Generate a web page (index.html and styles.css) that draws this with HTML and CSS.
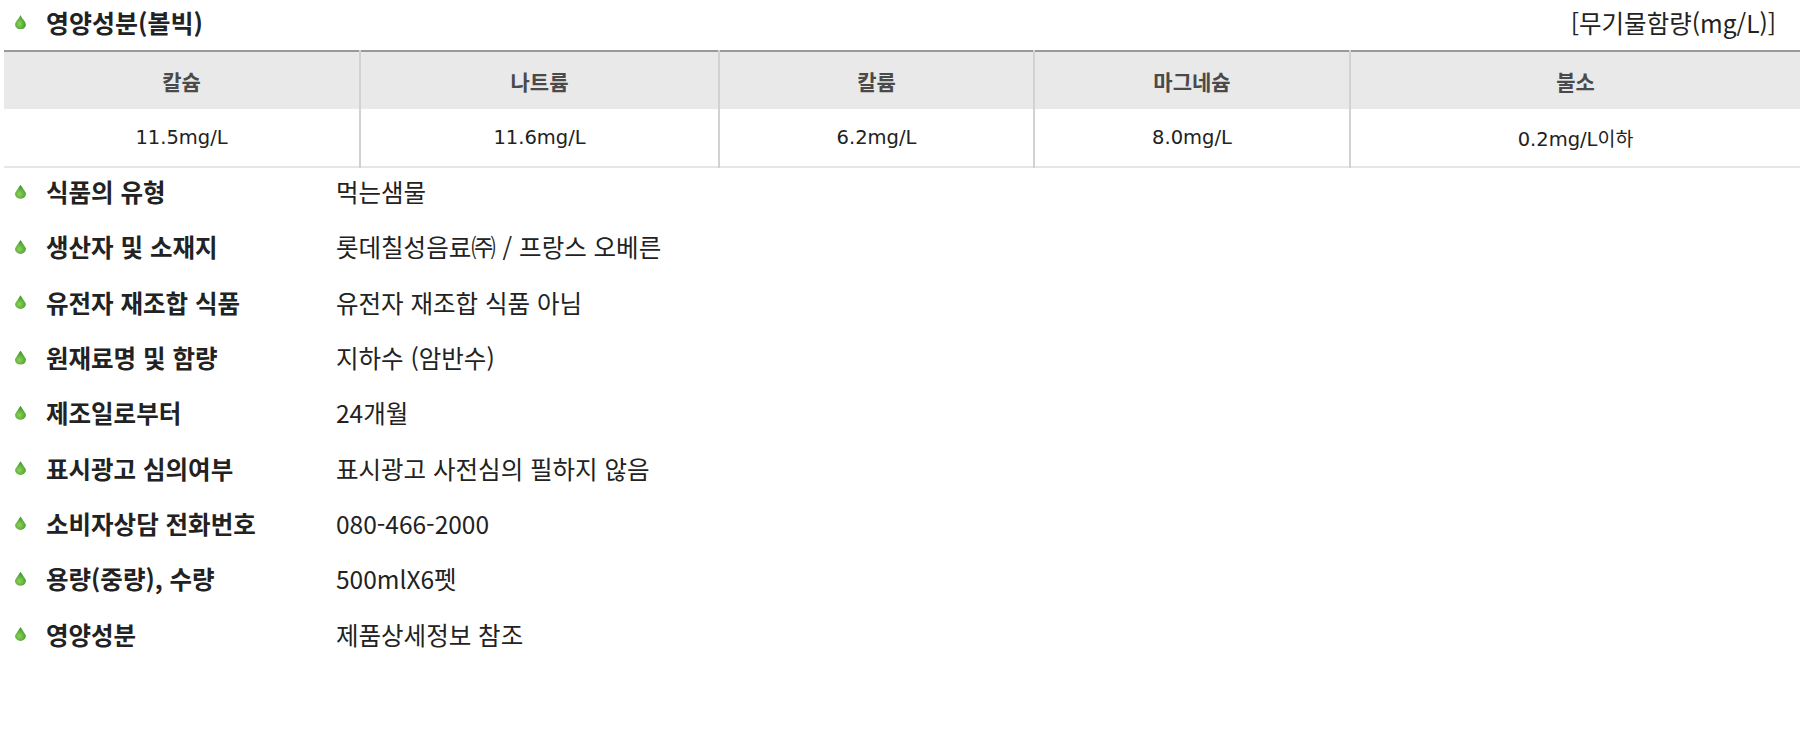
FILE: index.html
```html
<!DOCTYPE html>
<html lang="ko">
<head>
<meta charset="utf-8">
<link rel="stylesheet" href="styles.css">
</head>
<body>
<div class="page">
  <div class="title-row">
    <h2 class="title"><svg class="drop" viewBox="0 0 10 13"><defs><radialGradient id="g1" cx="0.4" cy="0.6" r="0.6"><stop offset="0" stop-color="#8fd05a"/><stop offset="1" stop-color="#3f9a2a"/></radialGradient></defs><path d="M5 0 C6 3 10 6 10 9 A5 4.5 0 0 1 0 9 C0 6 4 3 5 0 Z" fill="url(#g1)"/></svg>영양성분(볼빅)</h2>
    <span class="unit">[무기물함량(mg/L)]</span>
  </div>
  <table class="minerals">
    <colgroup>
      <col class="c1"><col class="c2"><col class="c3"><col class="c4"><col class="c5">
    </colgroup>
    <thead>
      <tr><th>칼슘</th><th>나트륨</th><th>칼륨</th><th>마그네슘</th><th>불소</th></tr>
    </thead>
    <tbody>
      <tr><td>11.5mg/L</td><td>11.6mg/L</td><td>6.2mg/L</td><td>8.0mg/L</td><td>0.2mg/L이하</td></tr>
    </tbody>
  </table>
  <ul class="info">
    <li><span class="label">식품의 유형</span><span class="value">먹는샘물</span></li>
    <li><span class="label">생산자 및 소재지</span><span class="value">롯데칠성음료㈜ / 프랑스 오베른</span></li>
    <li><span class="label">유전자 재조합 식품</span><span class="value">유전자 재조합 식품 아님</span></li>
    <li><span class="label">원재료명 및 함량</span><span class="value">지하수 (암반수)</span></li>
    <li><span class="label">제조일로부터</span><span class="value">24개월</span></li>
    <li><span class="label">표시광고 심의여부</span><span class="value">표시광고 사전심의 필하지 않음</span></li>
    <li><span class="label">소비자상담 전화번호</span><span class="value">080-466-2000</span></li>
    <li><span class="label">용량(중량), 수량</span><span class="value">500mlX6펫</span></li>
    <li><span class="label">영양성분</span><span class="value">제품상세정보 참조</span></li>
  </ul>
</div>
</body>
</html>
```

FILE: styles.css
```css
html, body {
  margin: 0;
  padding: 0;
  background: #fff;
}
body {
  font-family: "Noto Sans CJK KR", "Noto Sans", sans-serif;
  color: #222;
}
.page {
  width: 1796px;
  margin-left: 4px;
}
.title-row {
  height: 44px;
  display: flex;
  align-items: center;
  justify-content: space-between;
  padding: 0 24px 0 11px;
  margin-bottom: 6px;
}
.title {
  margin: 0;
  font-size: 25px;
  font-weight: 700;
  display: flex;
  align-items: center;
  color: #222;
}
.drop {
  width: 11px;
  height: 14px;
  margin-right: 20px;
  flex: none;
}
.unit {
  font-size: 24.5px;
  color: #222;
}
.minerals {
  width: 1796px;
  border-collapse: collapse;
  table-layout: fixed;
  border-top: 2px solid #9a9a9a;
  border-bottom: 2px solid #e6e6e6;
}
.c1 { width: 356px; }
.c2 { width: 359px; }
.c3 { width: 315px; }
.c4 { width: 316px; }
.c5 { width: auto; }
.minerals th, .minerals td {
  text-align: center;
  border-left: 2px solid #d2d2d2;
  padding: 0;
}
.minerals th:first-child, .minerals td:first-child {
  border-left: none;
}
.minerals th {
  height: 57px;
  background: #e9e9e9;
  font-size: 21px;
  font-weight: 700;
  color: #4a4a4a;
}
.minerals td {
  height: 57px;
  font-family: "DejaVu Sans", "Noto Sans CJK KR", sans-serif;
  font-size: 19.5px;
  color: #222;
}
.info {
  list-style: none;
  margin: -4px 0 0;
  padding: 0;
}
.info li {
  height: 55.3px;
  display: flex;
  align-items: center;
  font-size: 24.5px;
}
.info li::before {
  content: "";
  width: 11px;
  height: 14px;
  margin-left: 11px;
  margin-right: 20px;
  flex: none;
  background: radial-gradient(circle at 40% 65%, #8fd05a 0%, #3f9a2a 70%);
  border-radius: 50% 50% 50% 50% / 60% 60% 40% 40%;
  clip-path: polygon(50% 0, 100% 60%, 100% 100%, 0 100%, 0 60%);
}
.label {
  width: 290px;
  font-weight: 700;
  flex: none;
}
.value {
  font-weight: 400;
}
```
